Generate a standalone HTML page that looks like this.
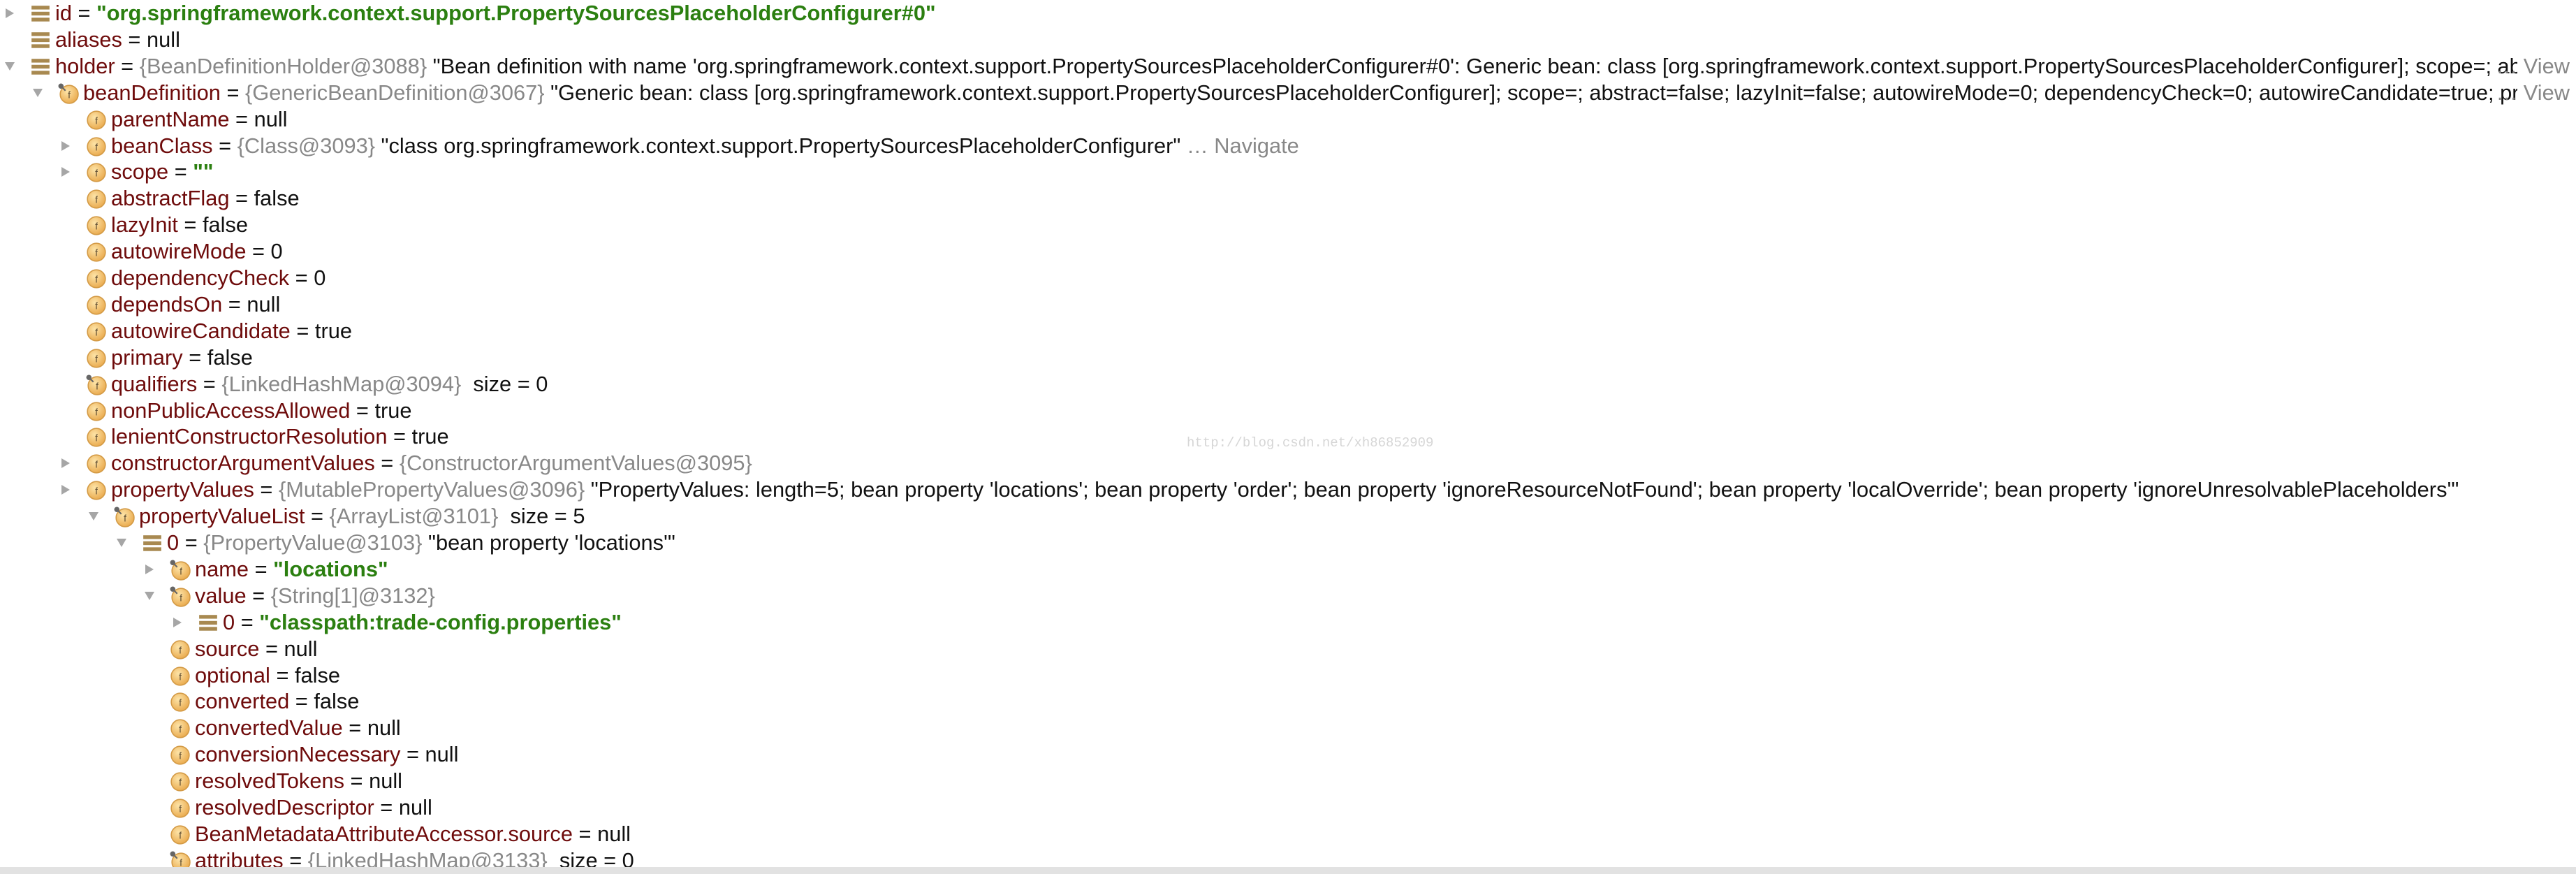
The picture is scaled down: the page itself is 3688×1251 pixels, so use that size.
<!DOCTYPE html>
<html><head><meta charset="utf-8"><style>
html,body{margin:0;padding:0;background:#fff;width:3688px;height:1251px;overflow:hidden;position:relative;font-family:"Liberation Sans",sans-serif;}
.r{position:absolute;right:0;height:38px;line-height:38px;white-space:nowrap;font-size:30.8px;color:#111;}
.a{position:absolute;left:6px;top:11px;width:16px;height:16px}
.ic{position:absolute;left:43px;top:5px;width:30px;height:30px}
.t{position:absolute;left:79px;right:84px;overflow:hidden;top:0}
.n{color:#6e0b0b}
.g{color:#888}
.s{color:#2b7f10;font-weight:bold}
.v{position:absolute;right:9px;color:#888;font-size:30.8px}
.wm{position:absolute;left:1699px;top:623px;font-family:"Liberation Mono",monospace;font-size:19px;color:#d6d6d6}
.bot{position:absolute;left:0;right:0;top:1241px;height:10px;background:#e2e2e2}
</style></head><body>
<svg width="0" height="0" style="position:absolute">
<defs>
<radialGradient id="og" cx="40%" cy="35%" r="70%"><stop offset="0" stop-color="#fde4a8"/><stop offset="1" stop-color="#e9a84a"/></radialGradient>
<symbol id="bars" viewBox="0 0 28 28"><rect x="2" y="3" width="24" height="5" fill="#a88950"/><rect x="2" y="11" width="24" height="5" fill="#a88950"/><rect x="2" y="19" width="24" height="5" fill="#a88950"/></symbol>
<symbol id="f" viewBox="0 0 28 28"><circle cx="14" cy="14" r="12" fill="url(#og)" stroke="#d39a45" stroke-width="1.5"/><text x="14" y="19" text-anchor="middle" font-family="Liberation Sans" font-size="13" fill="#5b4a30">f</text></symbol>
<symbol id="fp" viewBox="0 0 28 28"><circle cx="15" cy="15" r="12" fill="url(#og)" stroke="#d39a45" stroke-width="1.5"/><text x="15" y="20" text-anchor="middle" font-family="Liberation Sans" font-size="13" fill="#5b4a30">f</text><circle cx="4" cy="4" r="3.5" fill="#666"/><line x1="4" y1="4" x2="10" y2="10" stroke="#666" stroke-width="2"/></symbol>
<symbol id="ar" viewBox="0 0 16 16"><polygon points="2,1 14,8 2,15" fill="#a6a6a6"/></symbol>
<symbol id="ad" viewBox="0 0 16 16"><polygon points="1,2 15,2 8,14" fill="#a6a6a6"/></symbol>
</defs></svg>

<div class="r" style="top:0;left:0"><svg class="a"><use href="#ar"/></svg><svg class="ic"><use href="#bars"/></svg><div class="t"><span class="n">id</span> = <span class="s">"org.springframework.context.support.PropertySourcesPlaceholderConfigurer#0"</span></div></div>
<div class="r" style="top:38px;left:0"><svg class="ic"><use href="#bars"/></svg><div class="t"><span class="n">aliases</span> = null</div></div>
<div class="r" style="top:76px;left:0"><svg class="a"><use href="#ad"/></svg><svg class="ic"><use href="#bars"/></svg><div class="t"><span class="n">holder</span> = <span class="g">{BeanDefinitionHolder@3088}</span> "Bean definition with name 'org.springframework.context.support.PropertySourcesPlaceholderConfigurer#0': Generic bean: class [org.springframework.context.support.PropertySourcesPlaceholderConfigurer]; scope=; abstract=false; lazyInit=false</div><span class="v">… View</span></div>
<div class="r" style="top:114px;left:40px"><svg class="a"><use href="#ad"/></svg><svg class="ic"><use href="#fp"/></svg><div class="t"><span class="n">beanDefinition</span> = <span class="g">{GenericBeanDefinition@3067}</span> "Generic bean: class [org.springframework.context.support.PropertySourcesPlaceholderConfigurer]; scope=; abstract=false; lazyInit=false; autowireMode=0; dependencyCheck=0; autowireCandidate=true; primary=false</div><span class="v">… View</span></div>
<div class="r" style="top:152px;left:80px"><svg class="ic"><use href="#f"/></svg><div class="t"><span class="n">parentName</span> = null</div></div>
<div class="r" style="top:190px;left:80px"><svg class="a"><use href="#ar"/></svg><svg class="ic"><use href="#f"/></svg><div class="t"><span class="n">beanClass</span> = <span class="g">{Class@3093}</span> "class org.springframework.context.support.PropertySourcesPlaceholderConfigurer" <span class="g">… Navigate</span></div></div>
<div class="r" style="top:227px;left:80px"><svg class="a"><use href="#ar"/></svg><svg class="ic"><use href="#f"/></svg><div class="t"><span class="n">scope</span> = <span class="s">""</span></div></div>
<div class="r" style="top:265px;left:80px"><svg class="ic"><use href="#f"/></svg><div class="t"><span class="n">abstractFlag</span> = false</div></div>
<div class="r" style="top:303px;left:80px"><svg class="ic"><use href="#f"/></svg><div class="t"><span class="n">lazyInit</span> = false</div></div>
<div class="r" style="top:341px;left:80px"><svg class="ic"><use href="#f"/></svg><div class="t"><span class="n">autowireMode</span> = 0</div></div>
<div class="r" style="top:379px;left:80px"><svg class="ic"><use href="#f"/></svg><div class="t"><span class="n">dependencyCheck</span> = 0</div></div>
<div class="r" style="top:417px;left:80px"><svg class="ic"><use href="#f"/></svg><div class="t"><span class="n">dependsOn</span> = null</div></div>
<div class="r" style="top:455px;left:80px"><svg class="ic"><use href="#f"/></svg><div class="t"><span class="n">autowireCandidate</span> = true</div></div>
<div class="r" style="top:493px;left:80px"><svg class="ic"><use href="#f"/></svg><div class="t"><span class="n">primary</span> = false</div></div>
<div class="r" style="top:531px;left:80px"><svg class="ic"><use href="#fp"/></svg><div class="t"><span class="n">qualifiers</span> = <span class="g">{LinkedHashMap@3094}</span>&nbsp; size = 0</div></div>
<div class="r" style="top:569px;left:80px"><svg class="ic"><use href="#f"/></svg><div class="t"><span class="n">nonPublicAccessAllowed</span> = true</div></div>
<div class="r" style="top:606px;left:80px"><svg class="ic"><use href="#f"/></svg><div class="t"><span class="n">lenientConstructorResolution</span> = true</div></div>
<div class="r" style="top:644px;left:80px"><svg class="a"><use href="#ar"/></svg><svg class="ic"><use href="#f"/></svg><div class="t"><span class="n">constructorArgumentValues</span> = <span class="g">{ConstructorArgumentValues@3095}</span></div></div>
<div class="r" style="top:682px;left:80px"><svg class="a"><use href="#ar"/></svg><svg class="ic"><use href="#f"/></svg><div class="t"><span class="n">propertyValues</span> = <span class="g">{MutablePropertyValues@3096}</span> "PropertyValues: length=5; bean property 'locations'; bean property 'order'; bean property 'ignoreResourceNotFound'; bean property 'localOverride'; bean property 'ignoreUnresolvablePlaceholders'"</div></div>
<div class="r" style="top:720px;left:120px"><svg class="a"><use href="#ad"/></svg><svg class="ic"><use href="#fp"/></svg><div class="t"><span class="n">propertyValueList</span> = <span class="g">{ArrayList@3101}</span>&nbsp; size = 5</div></div>
<div class="r" style="top:758px;left:160px"><svg class="a"><use href="#ad"/></svg><svg class="ic"><use href="#bars"/></svg><div class="t"><span class="n">0</span> = <span class="g">{PropertyValue@3103}</span> "bean property 'locations'"</div></div>
<div class="r" style="top:796px;left:200px"><svg class="a"><use href="#ar"/></svg><svg class="ic"><use href="#fp"/></svg><div class="t"><span class="n">name</span> = <span class="s">"locations"</span></div></div>
<div class="r" style="top:834px;left:200px"><svg class="a"><use href="#ad"/></svg><svg class="ic"><use href="#fp"/></svg><div class="t"><span class="n">value</span> = <span class="g">{String[1]@3132}</span></div></div>
<div class="r" style="top:872px;left:240px"><svg class="a"><use href="#ar"/></svg><svg class="ic"><use href="#bars"/></svg><div class="t"><span class="n">0</span> = <span class="s">"classpath:trade-config.properties"</span></div></div>
<div class="r" style="top:910px;left:200px"><svg class="ic"><use href="#f"/></svg><div class="t"><span class="n">source</span> = null</div></div>
<div class="r" style="top:948px;left:200px"><svg class="ic"><use href="#f"/></svg><div class="t"><span class="n">optional</span> = false</div></div>
<div class="r" style="top:985px;left:200px"><svg class="ic"><use href="#f"/></svg><div class="t"><span class="n">converted</span> = false</div></div>
<div class="r" style="top:1023px;left:200px"><svg class="ic"><use href="#f"/></svg><div class="t"><span class="n">convertedValue</span> = null</div></div>
<div class="r" style="top:1061px;left:200px"><svg class="ic"><use href="#f"/></svg><div class="t"><span class="n">conversionNecessary</span> = null</div></div>
<div class="r" style="top:1099px;left:200px"><svg class="ic"><use href="#f"/></svg><div class="t"><span class="n">resolvedTokens</span> = null</div></div>
<div class="r" style="top:1137px;left:200px"><svg class="ic"><use href="#f"/></svg><div class="t"><span class="n">resolvedDescriptor</span> = null</div></div>
<div class="r" style="top:1175px;left:200px"><svg class="ic"><use href="#f"/></svg><div class="t"><span class="n">BeanMetadataAttributeAccessor.source</span> = null</div></div>
<div class="r" style="top:1213px;left:200px"><svg class="ic"><use href="#fp"/></svg><div class="t"><span class="n">attributes</span> = <span class="g">{LinkedHashMap@3133}</span>&nbsp; size = 0</div></div>

<div class="wm">http://blog.csdn.net/xh86852909</div>
<div class="bot"></div>
</body></html>
